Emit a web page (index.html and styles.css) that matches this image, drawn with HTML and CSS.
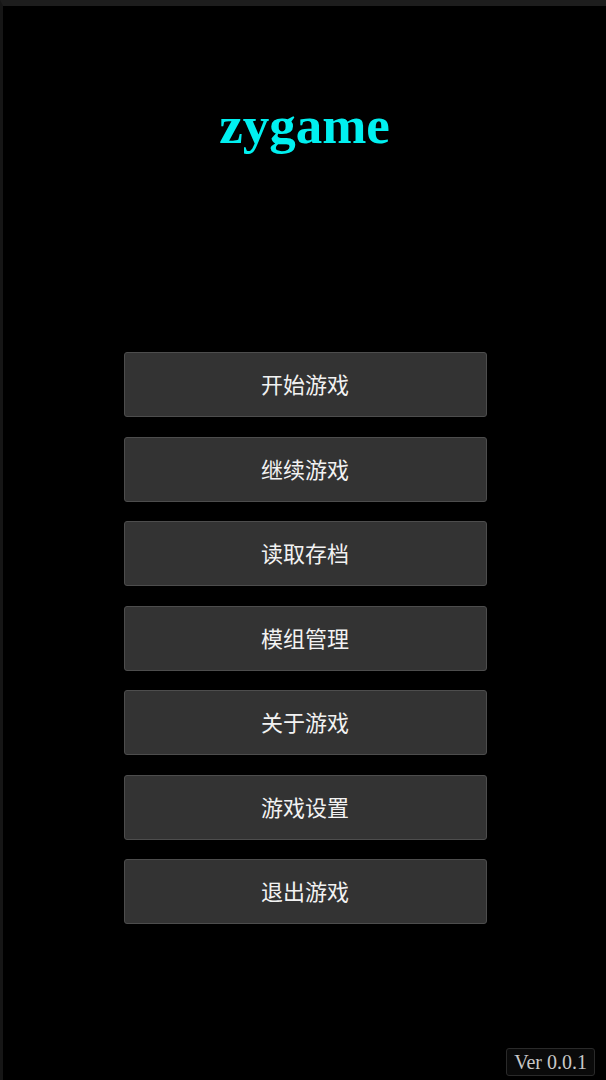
FILE: index.html
```html
<!DOCTYPE html>
<html lang="zh">
<head>
<meta charset="utf-8">
<link rel="stylesheet" href="styles.css">
</head>
<body>
<div class="frame">
  <h1 class="title">zygame</h1>
  <nav class="menu">
    <button class="btn">开始游戏</button>
    <button class="btn">继续游戏</button>
    <button class="btn">读取存档</button>
    <button class="btn">模组管理</button>
    <button class="btn">关于游戏</button>
    <button class="btn">游戏设置</button>
    <button class="btn">退出游戏</button>
  </nav>
  <div class="version">Ver 0.0.1</div>
</div>
</body>
</html>
```

FILE: styles.css
```css
html, body {
  margin: 0;
  padding: 0;
  background: #000;
  height: 100%;
}
.frame {
  position: relative;
  box-sizing: border-box;
  height: 1080px;
  border-top: 6px solid #1d1d1d;
  border-left: 3px solid #161616;
  background: #000;
  display: flex;
  flex-direction: column;
  align-items: center;
}
.title {
  margin: 91px 0 0 0;
  font-family: "Liberation Serif", "DejaVu Serif", serif;
  font-weight: bold;
  font-size: 53px;
  line-height: 56px;
  color: #00f0f0;
  padding-left: 0;
}
.menu {
  margin-top: 199px;
  display: flex;
  flex-direction: column;
  gap: 19.5px;
  margin-left: 1px;
}
.btn {
  width: 363px;
  height: 65px;
  background: #333333;
  border: 1px solid #4d4d4d;
  border-radius: 3px;
  color: #f2f2f2;
  font-family: "Noto Sans CJK SC", "Noto Sans", sans-serif;
  font-size: 22px;
  padding: 0 0 3px 0;
}
.version {
  position: absolute;
  right: 11px;
  bottom: 4px;
  padding: 2px 7px;
  border: 1px solid #2a2a2a;
  border-radius: 3px;
  background: #0a0a0a;
  color: #c8c8c8;
  font-family: "Liberation Serif", "DejaVu Serif", serif;
  font-size: 20px;
  line-height: 22px;
}
```
